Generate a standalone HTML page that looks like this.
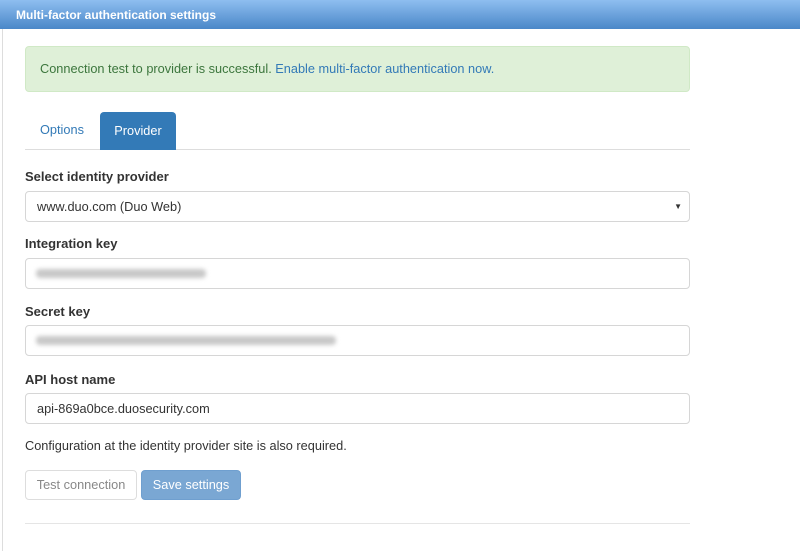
<!DOCTYPE html>
<html><head><style>
body{margin:0;width:800px;height:551px;background:#fff;font-family:"Liberation Sans",sans-serif;font-size:12.75px;color:#333;position:relative;overflow:hidden}
.hdr{position:absolute;left:0;top:0;width:800px;height:29px;background:linear-gradient(#8ebef0,#4a87c8);color:#fff;font-weight:bold;font-size:12px;line-height:30px;padding-left:16px;box-sizing:border-box}
.lb{position:absolute;left:2px;top:29px;bottom:0;width:1px;background:#ddd}
.abs{position:absolute}
.alert{left:25px;top:46px;width:665px;height:46px;background:#dff0d8;border:1px solid #d0e9c6;border-radius:4px;box-sizing:border-box;color:#3c763d;line-height:44px;padding-left:14px}
.alert a{color:#337ab7}
.tabline{left:25px;top:149px;width:665px;height:1px;background:#ddd}
.tab{left:100px;top:112px;width:76px;height:38px;background:#337ab7;color:#fff;border-radius:4px 4px 0 0;text-align:center;line-height:37px}
.opt{left:40px;top:122px;color:#337ab7}
.lab{left:25px;font-weight:bold;font-size:13px}
.in{left:25px;width:665px;height:31px;border:1px solid #d6d6d6;border-radius:4px;box-sizing:border-box;padding-left:11px;line-height:29px}
.blur{position:absolute;top:10px;height:9px;background:#c8c8c8;filter:blur(2px);border-radius:4px}
.btn{top:470px;height:30px;border-radius:4px;box-sizing:border-box;line-height:28px;text-align:center}
.hr{left:25px;top:523px;width:665px;height:1px;background:#e5e5e5}
</style></head><body>
<div class="hdr">Multi-factor authentication settings</div>
<div class="lb"></div>
<div class="abs alert">Connection test to provider is successful. <a>Enable multi-factor authentication now.</a></div>
<div class="abs opt">Options</div>
<div class="abs tabline"></div>
<div class="abs tab">Provider</div>
<div class="abs lab" style="top:169px">Select identity provider</div>
<div class="abs in" style="top:191px">www.duo.com (Duo Web)<span style="position:absolute;right:7px;font-size:8px">▼</span></div>
<div class="abs lab" style="top:236px">Integration key</div>
<div class="abs in" style="top:258px"><div class="blur" style="left:10px;width:170px"></div></div>
<div class="abs lab" style="top:304px">Secret key</div>
<div class="abs in" style="top:325px"><div class="blur" style="left:10px;width:300px"></div></div>
<div class="abs lab" style="top:372px">API host name</div>
<div class="abs in" style="top:393px">api-869a0bce.duosecurity.com</div>
<div class="abs" style="left:25px;top:438px">Configuration at the identity provider site is also required.</div>
<div class="abs btn" style="left:25px;width:112px;border:1px solid #ddd;color:#888">Test connection</div>
<div class="abs btn" style="left:141px;width:100px;background:#7aa7d3;border:1px solid #6f9fcf;color:#fff">Save settings</div>
<div class="abs hr"></div>
</body></html>
